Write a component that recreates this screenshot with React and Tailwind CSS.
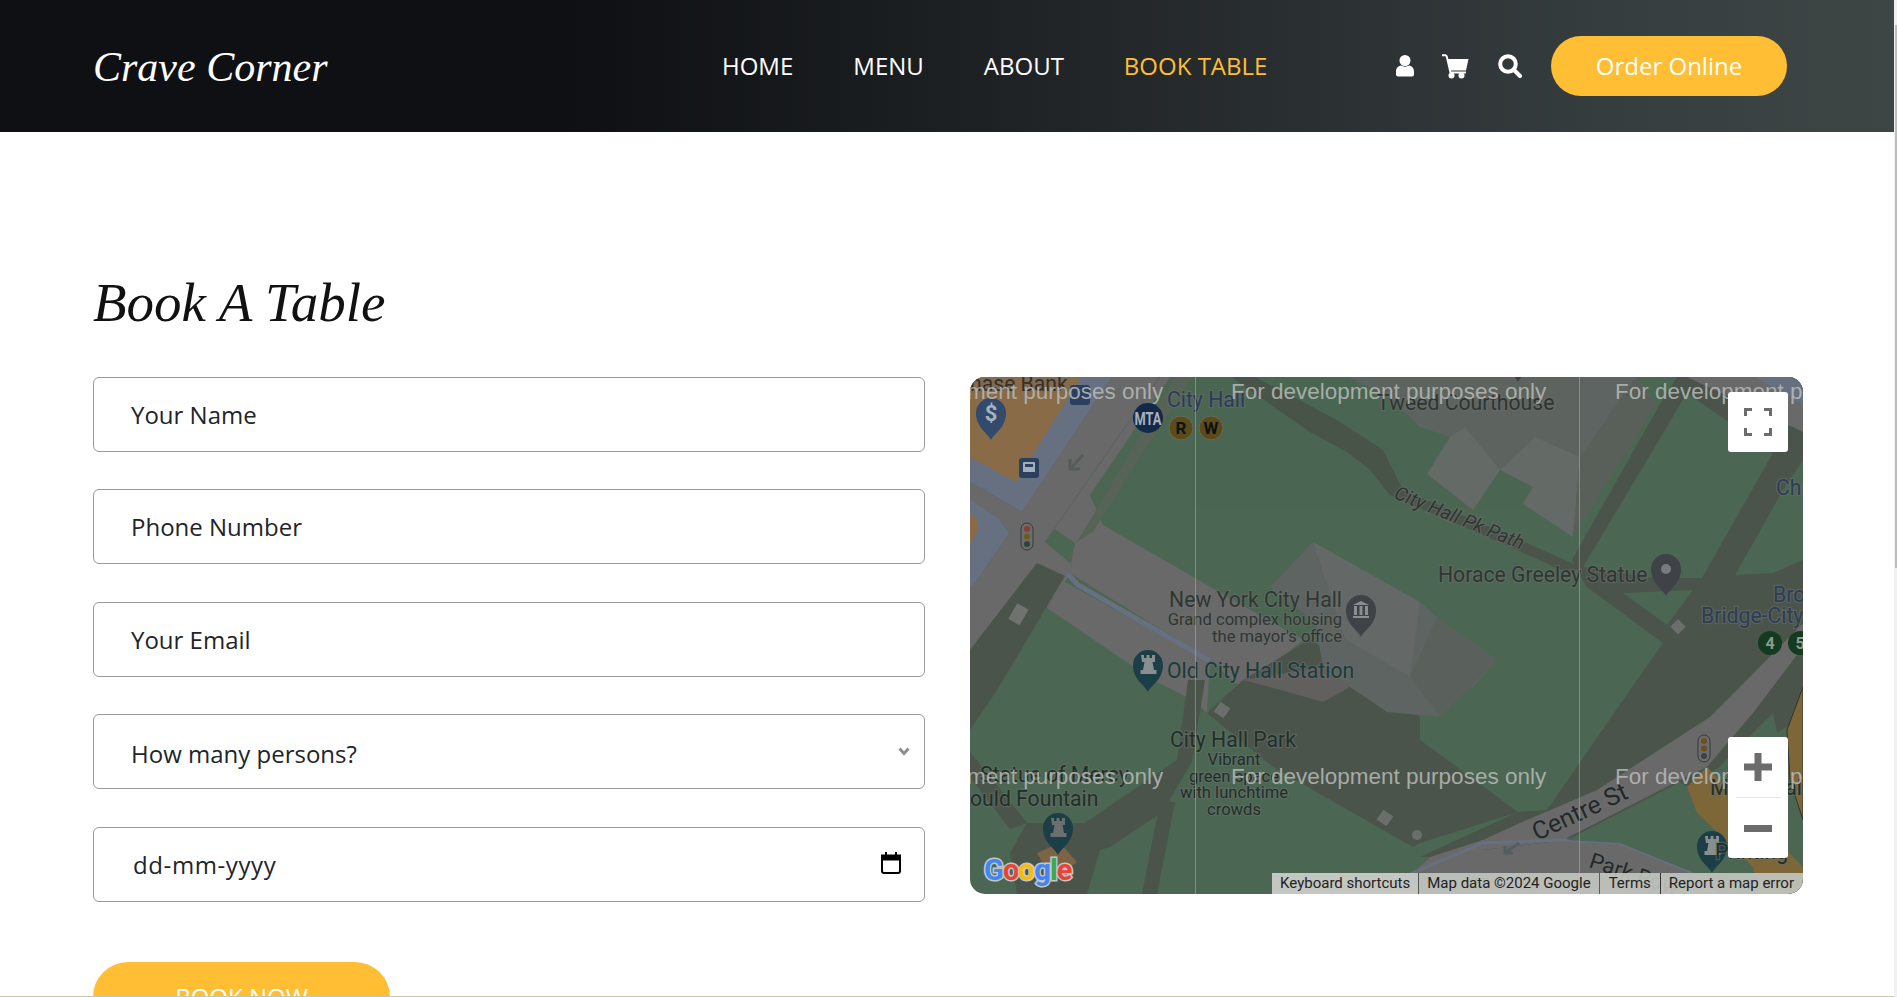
const ORANGE = "#8a6b47";
const GOLD = "#7d6637";
const GRAY = "#696969";
const SLATE = "#667080";
const PARK = "#4b6652";
const DARK = "#4a544a";
const BLD = "#5e6461";

function Label({ x, y, size = 21.2, fill = "#2a3a34", anchor = "start", rot, italic, children }) {
  return (
    <text
      x={x}
      y={y}
      fontSize={size}
      fill={fill}
      textAnchor={anchor}
      fontStyle={italic ? "italic" : undefined}
      stroke="#6a6f6b"
      strokeWidth="2.5"
      strokeOpacity="0.55"
      paintOrder="stroke"
      transform={rot ? `rotate(${rot} ${x} ${y})` : undefined}
    >
      {children}
    </text>
  );
}

function Pin({ x, y, fill, children }) {
  return (
    <g transform={`translate(${x} ${y})`}>
      <path d="M0 0c-3-7-15-12-15-27a15 15 0 1 1 30 0c0 15-12 20-15 27z" fill={fill} />
      {children}
    </g>
  );
}

function Rook({ color = "#6b6f70" }) {
  return (
    <path
      d="M-7-37h3v3h2.500v-3h3v3h2.500v-3h3v7h-2.500l1.500 8h2.500v4h-16v-4h2.500l1.500-8h-2.500z"
      fill={color}
    />
  );
}

function Light({ x, y, a, b, c }) {
  return (
    <g>
      <rect x={x} y={y} width="12" height="27" rx="6" fill="#6c6c6c" stroke="#333a3a" strokeWidth="1" />
      <circle cx={x + 6} cy={y + 6} r="3" fill={a} />
      <circle cx={x + 6} cy={y + 13.500} r="3" fill={b} />
      <circle cx={x + 6} cy={y + 21} r="3" fill={c} />
    </g>
  );
}

function MapArt() {
  return (
    <svg viewBox="0 0 833 517" className="block w-full h-full" fontFamily="Roboto, sans-serif">
      <rect width="833" height="517" fill={PARK} />

      {/* top-left block */}
      <path d="M0 0H142L52 135L0 105Z" fill={SLATE} />
      <path d="M0 0H111L46 105L0 80Z" fill={ORANGE} />
      <path d="M0 122L27 140L40 156L0 213Z" fill={SLATE} />
      <path d="M0 136L8 143V153L0 168Z" fill={ORANGE} />

      {/* main grey road */}
      <path d="M142 0H200L120 118L133 148L105 166L100 196L95 205L77 231L67 186L0 273V213L40 156L27 140L0 122V105L52 135Z" fill={GRAY} />
      <path d="M142 0H190L75 165L66 180L52 135Z" fill={GRAY} />
      <path d="M190 0L75 165" stroke="#5d6063" strokeWidth="1" fill="none" />
      {/* green notch and thin path */}
      <path d="M75 165L85 152L105 166L100 186Z" fill={PARK} />
      <path d="M205 0H222L103 186L97 182Z" fill="#566356" />

      {/* grey bands */}
      <path d="M133 148L333 263L273 313L240 283L100 196L105 166Z" fill={GRAY} />
      <path d="M95 205L240 285L237 336L223 323L183 303L77 231Z" fill={GRAY} />
      <path d="M98 197L108 208L240 284" fill="none" stroke={SLATE} strokeWidth="5" />

      {/* dark paths */}
      <path d="M67 186L95 199L27 313L0 353V273Z" fill={DARK} />
      <path d="M57 446L40 476L47 517H117L130 473L115 446Z" fill={DARK} />
      <path d="M115 446L207 383L218 303L235 303L222 385L200 422L200 430L140 470L130 473Z" fill={DARK} />
      <path d="M190 425L205 425L187 517H172Z" fill={DARK} />
      <path d="M0 375L57 446L40 452L0 400Z" fill={DARK} />
      <path d="M262 0H285L367 43L413 73L433 113L420 118L400 93L377 75L340 55L268 5Z" fill={DARK} />
      <path d="M433 113L557 166L610 190L600 197L545 172L420 118Z" fill={DARK} />

      {/* city hall plaza */}
      <path d="M237 336L273 303L340 262L450 340L450 363L548 435L450 466L443 470L303 390Z" fill={DARK} />

      {/* right block */}
      <path d="M602 183L690 27L707 0H833V340L600 480H450L548 435L577 433L667 303L693 266L617 210Z" fill={DARK} />
      <path d="M613 190L717 16L803 76L732 201L683 201Z" fill={PARK} />
      <path d="M765 198L813 113L833 83V183L803 196Z" fill={PARK} />
      <path d="M653 216L723 213L697 248Z" fill={PARK} />
      <path d="M717 0H833V55Z" fill={GRAY} />
      <path d="M785 0H833V28Z" fill={SLATE} />

      {/* top building cluster */}
      <path d="M378 0H666L686 27L603 160L553 127L563 110L530 93L503 133L457 97L480 60L450 50L420 20Z" fill={BLD} />
      <path d="M457 97L503 133L530 93L495 50L480 60Z" fill="#646a67" />
      <path d="M553 127L603 160L610 80L565 60L530 93L563 110Z" fill="#646a67" />
      <path d="M610 80L666 0L686 27L603 160Z" fill="#596059" />

      {/* city hall building */}
      <path d="M343 165L450 225L467 240L528 283L503 310L483 320L470 340L417 335L380 310L353 290L345 245L300 210Z" fill={BLD} />
      <path d="M343 165L450 225L440 300L375 262Z" fill="#646967" />
      <path d="M467 240L528 283L470 340L440 300Z" fill="#5a605c" />
      <path d="M273 303L353 290L380 310L353 325L300 310Z" fill="#625f5f" />

      {/* Centre St */}
      <path d="M833 246V270L783 336L737 390L710 403L593 463L513 473L450 500V490L513 463L550 446L627 413L740 340L767 313Z" fill={GRAY} />
      <path d="M420 517L460 480L513 463L513 473L597 463L650 466L717 493L750 517Z" fill={GRAY} />
      <path d="M433 500L513 466L597 463" fill="none" stroke={SLATE} strokeWidth="3" />
      <path d="M597 463L650 466L717 493L745 517" fill="none" stroke={SLATE} strokeWidth="3" />

      {/* green and gold lower right */}
      <path d="M597 463L710 405L717 410L727 436L783 490L743 497L717 493L650 466Z" fill={PARK} />
      <path d="M717 410L737 390L743 396L833 490V517H790L783 490L727 436Z" fill={GOLD} />
      <path d="M743 396L803 336L817 403L833 450V490Z" fill={PARK} />
      <path d="M833 310L817 353L820 403L833 443Z" fill={GOLD} stroke="#2f3533" strokeWidth="1" />

      {/* south west gold patch */}
      <path d="M67 476L90 466L107 485L82 503Z" fill="#7d6444" />

      {/* arrows & small squares */}
      <path d="M113 78L101 91M100 82V92H110" stroke="#565b5e" strokeWidth="3" fill="none" />
      <path d="M549 466L536 475M535 469V476H543" stroke="#565b5e" strokeWidth="3" fill="none" />
      <rect x="42" y="228" width="13" height="18" fill="#6f7370" transform="rotate(30 48 237)" />
      <rect x="246" y="327" width="12" height="12" fill="#6a6f6c" transform="rotate(35 252 333)" />
      <rect x="409" y="435" width="12" height="12" fill="#6a6f6c" transform="rotate(35 415 441)" />
      <circle cx="447" cy="458" r="5" fill="#6a6f6c" />
      <rect x="703" y="244" width="11" height="11" fill="#6a6f6c" transform="rotate(45 708 249)" />

      {/* markers */}
      <Pin x={21} y={63} fill="#324a6b">
        <text x="0" y="-19" fontSize="22" fontWeight="700" fill="#a8b2bc" textAnchor="middle">$</text>
      </Pin>
      <rect x="49" y="81" width="20" height="20" rx="3" fill="#2a4060" />
      <path d="M54 85h10a1 1 0 0 1 1 1v9h-12v-9a1 1 0 0 1 1-1z" fill="#a5adb5" />
      <rect x="55" y="87" width="8" height="3" fill="#2a4060" />
      <rect x="100" y="8" width="20" height="20" rx="3" fill="#2a4060" />
      <Light x={51} y={146} a="#8a3f33" b="#6e5a1c" c="#2f4339" />
      <Light x={728} y={358} a="#6e4f1c" b="#6e4f1c" c="#3e4246" />

      <circle cx="178" cy="41" r="15" fill="#14284a" />
      <text x="178" y="48" fontSize="19" fontWeight="700" fill="#a8b2bc" textAnchor="middle" textLength="27" lengthAdjust="spacingAndGlyphs">MTA</text>
      <circle cx="211" cy="51" r="12" fill="#5b4c1c" stroke="#6a6a5a" strokeWidth="1" />
      <text x="211" y="57" fontSize="17" fontWeight="700" fill="#111" textAnchor="middle">R</text>
      <circle cx="241" cy="51" r="12" fill="#5b4c1c" stroke="#6a6a5a" strokeWidth="1" />
      <text x="241" y="57" fontSize="17" fontWeight="700" fill="#111" textAnchor="middle">W</text>

      <Pin x={391} y={260} fill="#3f4347">
        <path d="M-8-32l8-4 8 4zM-7-31h3v9h-3zM-1.500-31h3v9h-3zM4-31h3v9h-3zM-8-21h16v2h-16z" fill="#8a8e90" />
      </Pin>
      <Pin x={178} y={315} fill="#1c3f47">
        <Rook color="#87908f" />
      </Pin>
      <Pin x={88} y={478} fill="#1c3f47">
        <Rook />
      </Pin>
      <Pin x={742} y={496} fill="#1c3f47">
        <Rook color="#87908f" />
      </Pin>
      <Pin x={696} y={219} fill="#3f4347">
        <circle cx="0" cy="-27" r="5" fill="#787c7e" />
      </Pin>
      <Pin x={548} y={5} fill="#3f4347" />

      <circle cx="800" cy="266" r="12" fill="#143a20" />
      <text x="800" y="272" fontSize="16" fontWeight="700" fill="#8c9a90" textAnchor="middle">4</text>
      <circle cx="830" cy="266" r="12" fill="#143a20" />
      <text x="830" y="272" fontSize="16" fontWeight="700" fill="#8c9a90" textAnchor="middle">5</text>

      {/* place names */}
      <Label x={0} y={14} fill="#3a2f22">hase Bank</Label>
      <Label x={197} y={30} fill="#2c3d58">City Hall</Label>
      <Label x={407} y={33} fill="#303633">Tweed Courthouse</Label>
      <Label x={423} y={121} size={19.300} rot={22} italic fill="#303633">City Hall Pk Path</Label>
      <Label x={468} y={205} fill="#303633">Horace Greeley Statue</Label>
      <Label x={806} y={118} fill="#2c3d58">Cha</Label>
      <Label x={803} y={225} fill="#2c3d58">Broo</Label>
      <Label x={731} y={246} fill="#2c3d58">Bridge-City</Label>
      <Label x={372} y={230} anchor="end" fill="#303633">New York City Hall</Label>
      <Label x={372} y={248} size={16.600} anchor="end" fill="#303633">Grand complex housing</Label>
      <Label x={372} y={265} size={16.600} anchor="end" fill="#303633">the mayor's office</Label>
      <Label x={197} y={301} fill="#1d3a3c">Old City Hall Station</Label>
      <Label x={263} y={370} anchor="middle" fill="#203029">City Hall Park</Label>
      <Label x={264} y={388} size={16.600} anchor="middle" fill="#203029">Vibrant</Label>
      <Label x={264} y={405} size={16.600} anchor="middle" fill="#203029">green space</Label>
      <Label x={264} y={421} size={16.600} anchor="middle" fill="#203029">with lunchtime</Label>
      <Label x={264} y={438} size={16.600} anchor="middle" fill="#203029">crowds</Label>
      <Label x={10} y={405} fill="#203029">Statue of Mercy</Label>
      <Label x={0} y={429} fill="#203029">ould Fountain</Label>
      <Label x={567} y={464} size={25} rot={-25} fill="#25282a">Centre St</Label>
      <Label x={618} y={490} size={22} rot={18} fill="#25282a">Park Row</Label>
      <Label x={740} y={418} fill="#203029">Municipal</Label>
      <Label x={745} y={482} fill="#203029">Printing</Label>

      {/* tile seams */}
      <path d="M225.500 0V517M609.500 0V517" stroke="#aab2ac" strokeWidth="1" opacity="0.55" />

      {/* watermark */}
      <g fill="#b9bcb9" fontSize="22.500" fontFamily="'Liberation Sans', sans-serif" fillOpacity="0.85">
        <text x="-3" y="22">ment purposes only</text>
        <text x="261" y="22">For development purposes only</text>
        <text x="645" y="22">For development p</text>
        <text x="-3" y="407">ment purposes only</text>
        <text x="261" y="407">For development purposes only</text>
        <text x="645" y="407">For development p</text>
      </g>

      {/* logo */}
      <text x="14" y="503" fontSize="29" fontWeight="700" fontFamily="Roboto, sans-serif" stroke="#c4c6c4" strokeWidth="3" paintOrder="stroke" letterSpacing="-0.800">
        <tspan fill="#4285f4">G</tspan>
        <tspan fill="#ea4335">o</tspan>
        <tspan fill="#fbbc05">o</tspan>
        <tspan fill="#4285f4">g</tspan>
        <tspan fill="#34a853">l</tspan>
        <tspan fill="#ea4335">e</tspan>
      </text>
    </svg>
  );
}

function MapBar() {
  return (
    <div className="absolute right-0 bottom-0 flex h-[21px] items-center rounded-br-[15px] font-['Roboto',sans-serif] text-[15px] leading-[21px] text-[#222]">
      <span className="whitespace-nowrap bg-[#c3c6c1] px-[8px]">Keyboard shortcuts</span>
      <span className="h-full w-px bg-[#555]" />
      <span className="whitespace-nowrap bg-[#c4c8c1]/90 px-[8px]">Map data ©2024 Google</span>
      <span className="h-full w-px bg-[#7a5a20]" />
      <span className="whitespace-nowrap bg-[#c4c8c1]/90 px-[9px]">Terms</span>
      <span className="h-full w-px bg-[#333]" />
      <span className="whitespace-nowrap rounded-br-[15px] bg-[#c4c8c1]/90 pl-[8px] pr-[9px]">Report a map error</span>
    </div>
  );
}

function MapControls() {
  return (
    <>
      <button className="absolute left-[758px] top-[15px] flex h-[60px] w-[60px] items-center justify-center rounded-[3px] bg-white" aria-label="Fullscreen">
        <svg width="28" height="28" viewBox="0 0 28 28" fill="none" stroke="#6c6c6c" strokeWidth="3">
          <path d="M1.500 8V1.500H8M20 1.500H26.500V8M26.500 20V26.500H20M8 26.500H1.500V20" />
        </svg>
      </button>
      <div className="absolute left-[758px] top-[360px] flex h-[121px] w-[60px] flex-col items-center rounded-[3px] bg-white">
        <div className="flex h-[60px] w-full items-center justify-center">
          <svg width="28" height="28" viewBox="0 0 28 28" fill="#6c6c6c"><path d="M10.500 0h7v10.500H28v7H17.500V28h-7V17.500H0v-7h10.500z" /></svg>
        </div>
        <div className="h-px w-[45px] bg-[#e6e6e6]" />
        <div className="flex h-[60px] w-full items-center justify-center">
          <svg width="28" height="7" viewBox="0 0 28 7" fill="#6c6c6c"><rect width="28" height="7" /></svg>
        </div>
      </div>
    </>
  );
}

const inputCls =
  "block w-full h-[75px] rounded-[6px] border border-[#9a9a9a] bg-white pl-[37px] pr-[12px] text-[24px] text-[#212529] placeholder:text-[#212529] outline-none";

export default function App() {
  return (
    <div className="relative h-[997px] w-full overflow-hidden bg-white font-['Open_Sans',sans-serif]">
      <div className="mr-[3px]">
        <header className="flex h-[132px] items-center bg-[linear-gradient(90deg,#0e1013_0%,#0e1013_30%,#2a2f32_69%,#363d3f_85%,#3e4645_100%)] pl-[93px] pr-[107px]">
          <div className="w-[629px] pt-[2px] font-['Liberation_Serif',serif] text-[42px] italic leading-none text-white">Crave Corner</div>
          <nav className="flex items-center gap-[60px] text-[24px] text-white">
            <a>HOME</a>
            <a>MENU</a>
            <a>ABOUT</a>
            <a className="text-[#ffbe33]">BOOK TABLE</a>
          </nav>
          <div className="ml-auto flex items-center">
            <svg width="18" height="22" viewBox="0 0 18 22" fill="#fff" className="mr-[28px]">
              <circle cx="9" cy="5.500" r="5.500" />
              <path d="M0 17c0-4 2-6 5-6.500 2.500 1.500 5.500 1.500 8 0 3 .5 5 2.500 5 6.500v2.500c0 1-1 2-2 2H2c-1 0-2-1-2-2z" />
            </svg>
            <svg width="27" height="25" viewBox="0 0 27 25" className="mr-[29px]">
              <path d="M0 1.200h3.500l1.200 1L8.500 18.500H24" fill="none" stroke="#fff" strokeWidth="2" />
              <path d="M5.500 5H26.500L24 16.500H8.200z" fill="#fff" />
              <circle cx="9.500" cy="21.500" r="3" fill="#fff" />
              <circle cx="19.500" cy="21.500" r="3" fill="#fff" />
            </svg>
            <svg width="24" height="24" viewBox="0 0 24 24" fill="none" stroke="#fff" className="mr-[29px]">
              <circle cx="10" cy="10" r="7.800" strokeWidth="4" />
              <path d="M16 16l6 6" strokeWidth="4" strokeLinecap="round" />
            </svg>
            <button className="h-[60px] w-[236px] rounded-[30px] bg-[#ffbe33] text-[24px] text-white">Order Online</button>
          </div>
        </header>

        <main className="px-[93px] pt-[141px]">
          <h2 className="mb-[44px] h-[60px] font-['Liberation_Serif',serif] text-[55px] italic leading-[60px] text-[#111]">Book A Table</h2>
          <div className="flex items-start gap-[45px]">
            <form className="w-[832px] shrink-0">
              <input className={inputCls + " mb-[37px]"} placeholder="Your Name" />
              <input className={inputCls + " mb-[38px]"} placeholder="Phone Number" />
              <input className={inputCls + " mb-[37px]"} placeholder="Your Email" />
              <div className="relative mb-[38px]">
                <select className={inputCls + " appearance-none pt-[5px]"} defaultValue="">
                  <option value="">How many persons?</option>
                  <option>2</option>
                  <option>3</option>
                  <option>4</option>
                </select>
                <svg width="12" height="9" viewBox="0 0 12 9" className="pointer-events-none absolute right-[15px] top-[33px]" fill="none" stroke="#909090" strokeWidth="3">
                  <path d="M1.500 1.500L6 6.500l4.500-5" />
                </svg>
              </div>
              <div className="relative mb-[60px]">
                <input className={inputCls + " pl-[39px] tracking-[0.6px] placeholder:tracking-[0.6px]"} placeholder="dd-mm-yyyy" />
                <svg width="20" height="22" viewBox="0 0 20 22" className="pointer-events-none absolute right-[24px] top-[25px]" fill="none" stroke="#000" strokeWidth="2">
                  <rect x="1" y="4" width="18" height="17" rx="2" />
                  <path d="M1 3.500h18v4H1z" fill="#000" />
                  <path d="M5 0v4M15 0v4" />
                </svg>
              </div>
              <button type="button" className="h-[70px] w-[297px] rounded-[35px] bg-[#ffbe33] text-[24px] text-white">BOOK NOW</button>
            </form>
            <div className="relative h-[517px] w-[833px] shrink-0 overflow-hidden rounded-[15px]">
              <MapArt />
              <MapBar />
              <MapControls />
            </div>
          </div>
        </main>
      </div>
      <div className="absolute right-0 top-0 h-full w-[3px] bg-[#f1f1f1]">
        <div className="absolute right-0 top-[25px] h-[543px] w-[2px] bg-[#bdbdbd]" />
      </div>
      <div className="absolute bottom-0 left-0 h-px w-[1894px] bg-[#c9c6a8]" />
    </div>
  );
}
